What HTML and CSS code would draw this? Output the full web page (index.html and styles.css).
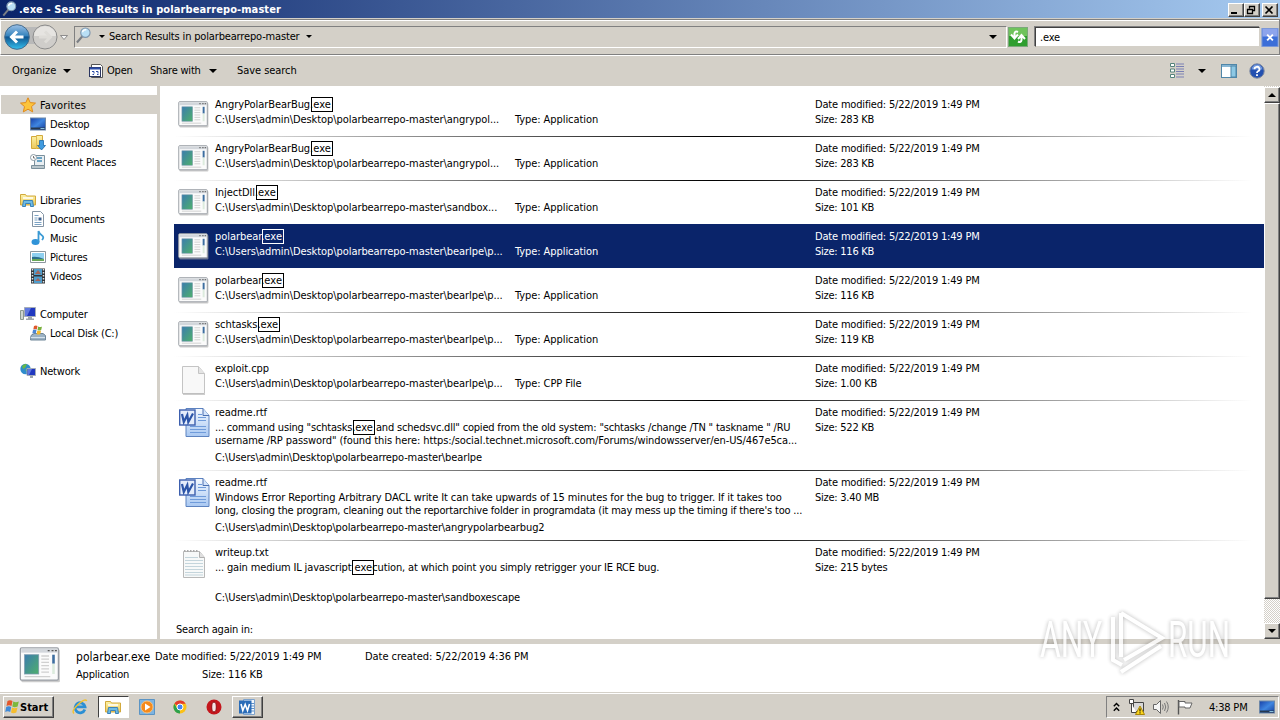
FILE: index.html
```html
<!DOCTYPE html>
<html lang="en">
<head>
    <meta charset="UTF-8">
    <meta name="viewport" content="width=device-width, initial-scale=1.0">
    <title>.exe - Search Results in polarbearrepo-master</title>
    <link rel="stylesheet" href="styles.css">
</head>
<body>
    <!-- Shared icons -->
    <svg class="defs">
        <defs>
            <linearGradient id="g-app" x1="0" y1="0" x2="1" y2="1">
                <stop offset="0" stop-color="#3b7cae"/><stop offset="1" stop-color="#4fb06c"/>
            </linearGradient>
            <linearGradient id="g-blue" x1="0" y1="0" x2="0" y2="1">
                <stop offset="0" stop-color="#9cc0e6"/><stop offset=".45" stop-color="#3583bd"/><stop offset=".5" stop-color="#0f5590"/><stop offset="1" stop-color="#35c0ee"/>
            </linearGradient>
            <linearGradient id="g-screen" x1="0" y1="0" x2="1" y2="1">
                <stop offset="0" stop-color="#1740a8"/><stop offset=".5" stop-color="#3f86e0"/><stop offset="1" stop-color="#123a9a"/>
            </linearGradient>
            <linearGradient id="g-folder" x1="0" y1="0" x2="0" y2="1">
                <stop offset="0" stop-color="#fdf3a8"/><stop offset="1" stop-color="#ecc85a"/>
            </linearGradient>
            <linearGradient id="g-word" x1="0" y1="0" x2="0" y2="1">
                <stop offset="0" stop-color="#f4f9ff"/><stop offset="1" stop-color="#a9c8f2"/>
            </linearGradient>
        </defs>
        <symbol id="app" viewBox="0 0 32 28">
            <rect x="1.5" y="2" width="30" height="25.5" rx="1" fill="#aaa" opacity=".6"/>
            <rect x=".7" y=".7" width="29.6" height="25" rx="1" fill="#fbfbfb" stroke="#9a9fa5"/>
            <rect x="1.4" y="1.4" width="28.2" height="3" fill="#d3d7dc"/>
            <path d="M22 2.8h1.5M25 2.8h1.5M27.6 2.8h1.5" stroke="#555"/>
            <rect x="4" y="6" width="11" height="15" fill="url(#g-app)" stroke="#7c9aae" stroke-width=".6"/>
            <path d="M17 7h6M17 9.500h6M17 12h6M17 14.500h6M17 17h6M17 19.500h6M4 23h20" stroke="#d0d0d0"/>
            <rect x="25.500" y="6" width="2" height="7" fill="#3d6ea0"/><path d="M26.500 13v8" stroke="#dcebdd" stroke-width="2"/>
        </symbol>
        <symbol id="page" viewBox="0 0 26 30">
            <path d="M1.500 1.500h16l6 7v20h-22z" fill="#f8f8f8" stroke="#c4c4c4"/>
            <path d="M17.500 1.500v7h6" fill="#e4e4e4" stroke="#c4c4c4"/>
            <path d="M2 29.300h22" stroke="#999" opacity=".6"/>
        </symbol>
        <symbol id="txt" viewBox="0 0 26 30">
            <path d="M2.500 2.500h16l5 6v20h-21z" fill="#f7f9f9" stroke="#b8b8b8"/>
            <path d="M4 8.500h13M4 11.500h18M4 14.500h18M4 17.500h18M4 20.500h18M4 23.500h18M4 26h18" stroke="#c4d5dc"/>
            <path d="M18.500 2.500v6h5" fill="#e0e0e0" stroke="#b0b0b0"/>
            <path d="M3 2h15" stroke="#aaa" stroke-width="2" stroke-dasharray="1.500 1.500"/>
        </symbol>
        <symbol id="rtf" viewBox="0 0 31 31">
            <path d="M7 1.500h17l6 7v21h-23z" fill="url(#g-word)" stroke="#5d83c0"/>
            <path d="M24 1.500v7h6" fill="#d4e4fa" stroke="#4a6fb0"/>
            <path d="M19 7.500h4M19 10.500h8M19 13.500h8M11 19.500h16M11 22.500h16M11 25.500h16" stroke="#6f9bda"/>
            <rect x=".7" y="3" width="15.300" height="15" fill="#e5edfb" stroke="#3c5fae" stroke-width="1.400"/>
            <path d="M3 7l1.800 8L8.300 8l1 7L14 6.500" fill="none" stroke="#2c55a8" stroke-width="2.200"/>
        </symbol>
        <symbol id="lens" viewBox="0 0 16 18">
            <path d="M1 16.500L7 9.500" stroke="#7a7e84" stroke-width="2.200"/>
            <circle cx="10" cy="6" r="5" fill="#b9dff5" stroke="#7f97ae" stroke-width="1.200"/>
            <path d="M7 5.500a3 3 0 0 1 4-2.500" fill="none" stroke="#fff" stroke-width="1.500"/>
        </symbol>
        <symbol id="library" viewBox="0 0 16 16">
            <path d="M.5 2.500h5l1 1.500h9v9H.5z" fill="url(#g-folder)" stroke="#d2a93c"/>
            <path d="M3 6h10" stroke="#fff" stroke-width="1.500"/>
            <path d="M2.500 14.500l1-6h9l1 6h-3v-3h-5v3z" fill="#6dbbe4" stroke="#3c83b8"/>
        </symbol>
        <symbol id="desktop" viewBox="0 0 16 16">
            <rect x=".5" y="2" width="15" height="12" fill="url(#g-screen)" stroke="#6d87a8"/>
            <path d="M1 12.500h14" stroke="#26384e" stroke-width="2"/>
            <path d="M10.500 12.500h4" stroke="#8ac3e0"/>
        </symbol>
    </svg>

    <header class="titlebar">
        <svg class="title-icon"><use href="#lens"/></svg>
        <span class="title">.exe - Search Results in polarbearrepo-master</span>
        <div class="window-buttons">
            <button class="win-btn"><svg viewBox="0 0 12 10"><path d="M2 8h6" stroke="#000" stroke-width="2"/></svg></button>
            <button class="win-btn"><svg viewBox="0 0 12 10"><path d="M4.500 3.500v-2h5v4h-2M4 1.500h6M2.500 4.500h5v4h-5zM2 4.500h6" fill="none" stroke="#000" stroke-width="1.300"/></svg></button>
            <button class="win-btn close"><svg viewBox="0 0 12 10"><path d="M2.500 1.500l7 7M9.500 1.500l-7 7" stroke="#000" stroke-width="1.700"/></svg></button>
        </div>
    </header>

    <nav class="navbar">
        <svg class="nav-arrows" viewBox="0 0 68 28">
            <rect x="10" y="4" width="36" height="17" fill="#b9b9b9"/>
            <circle cx="15" cy="14" r="12.300" fill="url(#g-blue)" stroke="#456b8c"/>
            <path d="M15 8.500L9.500 14l5.500 5.500M10 14h11.500" fill="none" stroke="#fff" stroke-width="3"/>
            <circle cx="43" cy="14" r="12" fill="#cfcdca" stroke="#8c8c8c"/>
            <path d="M32 13a11 10 0 0 1 22 0z" fill="#e6e4e1"/>
            <path d="M43 8.500l5.500 5.500l-5.500 5.500M37 14h11.500" fill="none" stroke="#dedcd8" stroke-width="3"/>
            <path d="M58.500 12.500h7l-3.500 4z" fill="#f6f6f6" stroke="#777" stroke-width=".8"/>
        </svg>
        <div class="address">
            <svg class="address-icon"><use href="#lens"/></svg>
            <i class="caret small"></i>
            <span class="crumb">Search Results in polarbearrepo-master</span>
            <i class="caret small"></i>
            <i class="caret last"></i>
        </div>
        <svg class="refresh" viewBox="0 0 20 20">
            <rect x=".5" y=".5" width="19" height="19" fill="#2f9e2f" stroke="#7aa87a"/>
            <path d="M1 1h18v8H1z" fill="#6fc35c"/>
            <path d="M10 5q-3-1.500-3.500 1.500v4M3 7.500l3.500 4l3.500-4M10 14.500q3 1.500 3.500-1.500V9M10 12l3.500-4l3.500 4" fill="none" stroke="#fff" stroke-width="2"/>
        </svg>
        <div class="search">.exe</div>
        <svg class="clear" viewBox="0 0 18 20">
            <rect x=".5" y=".5" width="17" height="19" fill="#3c6ed8" stroke="#7a98d8"/>
            <path d="M1 1h16v8H1z" fill="#8da4ec"/>
            <path d="M6 7l6 6M12 7l-6 6" stroke="#fff" stroke-width="2"/>
        </svg>
    </nav>

    <div class="toolbar">
        <span class="tool organize">Organize</span><i class="caret"></i>
        <svg class="open-icon" viewBox="0 0 14 14">
            <path d="M2.500.500h9l2 2v11h-11z" fill="#fff" stroke="#555"/>
            <rect x=".5" y="3.500" width="11" height="9" fill="#fff" stroke="#2a3560"/>
            <path d="M1 4.500h10" stroke="#2c4da8" stroke-width="2"/>
            <path d="M3 7.500h2v2M7 7.500h2v2M3.500 10.500h1.500M8 10.500h1.500" stroke="#2c4da8" fill="none"/>
        </svg>
        <span class="tool open">Open</span>
        <span class="tool share">Share with</span><i class="caret"></i>
        <span class="tool save">Save search</span>
        <div class="tool-right">
            <svg class="views" viewBox="0 0 14 16">
                <path d="M.5.500h4v3h-4zM.5 6h4v3h-4zM.5 11.500h4v3h-4z" fill="#fff" stroke="#55837b"/>
                <path d="M6 1h8M6 3.500h8M6 6h8M6 8.500h8M6 11h8M6 14h8" stroke="#7a80b4"/>
            </svg>
            <i class="caret"></i>
            <svg class="preview" viewBox="0 0 16 14">
                <rect x=".5" y=".5" width="15" height="13" fill="#fff" stroke="#4f86a8"/>
                <path d="M1 2h14" stroke="#87b6d4" stroke-width="2"/>
                <rect x="10" y="2" width="5" height="11" fill="#8dc8e4" stroke="#4f86a8"/>
            </svg>
            <svg class="help" viewBox="0 0 16 16">
                <circle cx="8" cy="8" r="7.200" fill="#2350b0" stroke="#7c88a0"/>
                <path d="M2.500 6.500a5.500 5 0 0 1 11 0z" fill="#6f96dc"/>
                <path d="M5.500 6.200a2.500 2.300 0 1 1 3.500 2q-1 .5-1 1.800M8 11.300v1.800" fill="none" stroke="#fff" stroke-width="1.800"/>
            </svg>
        </div>
    </div>

    <main class="content">
        <aside class="sidebar">
            <div class="side-group">
                <div class="side-item root active">
                    <svg viewBox="0 0 16 16"><path d="M8 .8l2.200 4.800 5.300.5-4 3.500 1.200 5.300L8 12.200l-4.700 2.700 1.200-5.300-4-3.500 5.300-.5z" fill="#fcc43c" stroke="#e08a1c"/></svg><span>Favorites</span>
                </div>
                <div class="side-item"><svg><use href="#desktop"/></svg><span>Desktop</span></div>
                <div class="side-item">
                    <svg viewBox="0 0 16 16"><path d="M1.500 1.500h5v-1h6v13h-11z" fill="url(#g-folder)" stroke="#d2a93c"/><path d="M6.500 1v13" stroke="#e0bc50"/><path d="M9.500 5.500h4v5h2L11.500 15 7.500 10.500h2z" fill="#3f9be0" stroke="#1d68a8" stroke-width=".8"/></svg><span>Downloads</span>
                </div>
                <div class="side-item">
                    <svg viewBox="0 0 16 16"><path d="M4.500 1.500h10v10h-10z" fill="#e8eef2" stroke="#7b909c"/><path d="M7 4h5M7 7h5" stroke="#6aa3c4" stroke-width="2"/><path d="M1.500 11.500h13v3h-13z" fill="#b9c6cc" stroke="#7b909c"/><circle cx="3.500" cy="3.500" r="3" fill="#fff" stroke="#8c9ba4"/><path d="M3.500 2v2h1.500" fill="none" stroke="#555" stroke-width=".8"/></svg><span>Recent Places</span>
                </div>
            </div>
            <div class="side-group">
                <div class="side-item root"><svg><use href="#library"/></svg><span>Libraries</span></div>
                <div class="side-item">
                    <svg viewBox="0 0 16 16"><path d="M2.500.500h8l3 3v12h-11z" fill="#fff" stroke="#8494a4"/><path d="M4.500 4.500h4M4.500 7h3M4.500 9h3M4.500 11.500h7M4.500 13.500h7" stroke="#7ba2c4"/><path d="M8.500 6.500h3v3h-3z" fill="#3c5f8c"/></svg><span>Documents</span>
                </div>
                <div class="side-item">
                    <svg viewBox="0 0 16 16"><ellipse cx="5.500" cy="12" rx="4" ry="3" fill="#2f93d8"/><path d="M8.500 12V1q1 3 3.500 4.500T12 10" fill="none" stroke="#3a9ad4" stroke-width="1.800"/></svg><span>Music</span>
                </div>
                <div class="side-item">
                    <svg viewBox="0 0 16 16"><path d="M.5 2.500h15v11H.5z" fill="#fff" stroke="#8c979e"/><path d="M2 4h12v8H2z" fill="#8fd0f0"/><path d="M2 8q5-1 12 2v2H2z" fill="#2c6f8c"/><path d="M2 11h12" stroke="#69a858" stroke-width="2"/></svg><span>Pictures</span>
                </div>
                <div class="side-item">
                    <svg viewBox="0 0 16 16"><path d="M1 .5h14v15H1z" fill="#303438"/><path d="M4 1h8v6H4zM4 8.500h8V15H4z" fill="#4f9dcc"/><path d="M5 6l3-4 3 4zM5 13l3-3 3 3z" fill="#a4665c"/><path d="M2.500 1v14M13.500 1v14" stroke="#dfe5e8" stroke-width="1.500" stroke-dasharray="1.500 1.500"/></svg><span>Videos</span>
                </div>
            </div>
            <div class="side-group">
                <div class="side-item root">
                    <svg viewBox="0 0 16 16"><path d="M.5 4.500h3v9h-3z" fill="#cfd6d0" stroke="#8c9a90"/><path d="M4.500 1.500h11v9h-11z" fill="#2038c0" stroke="#a4acb8"/><path d="M5 2h6L7 10H5z" fill="#5f78e0"/><path d="M8 11h4v1.500h2v1.500H6v-1.500h2z" fill="#9da5ac"/></svg><span>Computer</span>
                </div>
                <div class="side-item">
                    <svg viewBox="0 0 16 16"><path d="M1 10.500l3-2h9l2.500 2v4.500H.5z" fill="#9cb2c4" stroke="#6f8698"/><path d="M1 12.500h14" stroke="#d4e2ec"/><path d="M4 1q2-1 3.500 0l-.7 3.500q-2-1-3.500 0z" fill="#e0582c"/><path d="M8.200 1.500q2 1 3.800 0L11.200 5q-2 1-3.700 0z" fill="#7ab03c"/><path d="M3 5q2-1 3.500 0l-.7 3.500q-2-1-3.500 0z" fill="#4a86d4"/><path d="M7.300 5.500q2 1 3.800 0L10.300 9q-2 1-3.700 0z" fill="#f2b82c"/></svg><span>Local Disk (C:)</span>
                </div>
            </div>
            <div class="side-group">
                <div class="side-item root">
                    <svg viewBox="0 0 16 16"><circle cx="5.500" cy="6" r="5.200" fill="#2f8ccc"/><path d="M2 3q3-3 5-1.500L5 5 3 6zM5 7l4-2v4z" fill="#66b848"/><path d="M7 5.500h8.500v7H7z" fill="#2038c0" stroke="#a4acb8"/><path d="M8 6h4L9 12H8z" fill="#5f78e0"/><path d="M10 13h3v2h-3z" fill="#9da5ac"/></svg><span>Network</span>
                </div>
            </div>
        </aside>

        <section class="results">
            <div class="result">
                <svg class="thumb"><use href="#app"/></svg>
                <div class="info"><div class="name">AngryPolarBearBug.<mark>exe</mark></div><div class="line"><span class="path">C:\Users\admin\Desktop\polarbearrepo-master\angrypol...</span><span>Type: Application</span></div></div>
                <div class="meta"><div>Date modified: 5/22/2019 1:49 PM</div><div class="size">Size: 283 KB</div></div>
            </div>
            <div class="result">
                <svg class="thumb"><use href="#app"/></svg>
                <div class="info"><div class="name">AngryPolarBearBug.<mark>exe</mark></div><div class="line"><span class="path">C:\Users\admin\Desktop\polarbearrepo-master\angrypol...</span><span>Type: Application</span></div></div>
                <div class="meta"><div>Date modified: 5/22/2019 1:49 PM</div><div class="size">Size: 283 KB</div></div>
            </div>
            <div class="result">
                <svg class="thumb"><use href="#app"/></svg>
                <div class="info"><div class="name">InjectDll.<mark>exe</mark></div><div class="line"><span class="path">C:\Users\admin\Desktop\polarbearrepo-master\sandbox...</span><span>Type: Application</span></div></div>
                <div class="meta"><div>Date modified: 5/22/2019 1:49 PM</div><div class="size">Size: 101 KB</div></div>
            </div>
            <div class="result selected">
                <svg class="thumb"><use href="#app"/></svg>
                <div class="info"><div class="name">polarbear.<mark>exe</mark></div><div class="line"><span class="path">C:\Users\admin\Desktop\polarbearrepo-master\bearlpe\p...</span><span>Type: Application</span></div></div>
                <div class="meta"><div>Date modified: 5/22/2019 1:49 PM</div><div class="size">Size: 116 KB</div></div>
            </div>
            <div class="result">
                <svg class="thumb"><use href="#app"/></svg>
                <div class="info"><div class="name">polarbear.<mark>exe</mark></div><div class="line"><span class="path">C:\Users\admin\Desktop\polarbearrepo-master\bearlpe\p...</span><span>Type: Application</span></div></div>
                <div class="meta"><div>Date modified: 5/22/2019 1:49 PM</div><div class="size">Size: 116 KB</div></div>
            </div>
            <div class="result">
                <svg class="thumb"><use href="#app"/></svg>
                <div class="info"><div class="name">schtasks.<mark>exe</mark></div><div class="line"><span class="path">C:\Users\admin\Desktop\polarbearrepo-master\bearlpe\p...</span><span>Type: Application</span></div></div>
                <div class="meta"><div>Date modified: 5/22/2019 1:49 PM</div><div class="size">Size: 119 KB</div></div>
            </div>
            <div class="result">
                <svg class="thumb file"><use href="#page"/></svg>
                <div class="info"><div class="name">exploit.cpp</div><div class="line"><span class="path">C:\Users\admin\Desktop\polarbearrepo-master\bearlpe\p...</span><span>Type: CPP File</span></div></div>
                <div class="meta"><div>Date modified: 5/22/2019 1:49 PM</div><div class="size">Size: 1.00 KB</div></div>
            </div>
            <div class="result tall">
                <svg class="thumb word"><use href="#rtf"/></svg>
                <div class="info">
                    <div class="name">readme.rtf</div>
                    <div class="snippet">
                        <div class="tight">... command using "schtasks.<mark>exe</mark> and schedsvc.dll" copied from the old system: "schtasks /change /TN " taskname " /RU</div>
                        <div class="loose">username /RP password" (found this here: https:/social.technet.microsoft.com/Forums/windowsserver/en-US/467e5ca...</div>
                    </div>
                    <div class="where">C:\Users\admin\Desktop\polarbearrepo-master\bearlpe</div>
                </div>
                <div class="meta"><div>Date modified: 5/22/2019 1:49 PM</div><div class="size">Size: 522 KB</div></div>
            </div>
            <div class="result tall">
                <svg class="thumb word"><use href="#rtf"/></svg>
                <div class="info">
                    <div class="name">readme.rtf</div>
                    <div class="snippet">
                        <div class="loose">Windows Error Reporting Arbitrary DACL write It can take upwards of 15 minutes for the bug to trigger. If it takes too</div>
                        <div class="tight">long, closing the program, cleaning out the reportarchive folder in programdata (it may mess up the timing if there's too ...</div>
                    </div>
                    <div class="where">C:\Users\admin\Desktop\polarbearrepo-master\angrypolarbearbug2</div>
                </div>
                <div class="meta"><div>Date modified: 5/22/2019 1:49 PM</div><div class="size">Size: 3.40 MB</div></div>
            </div>
            <div class="result tall">
                <svg class="thumb file"><use href="#txt"/></svg>
                <div class="info">
                    <div class="name">writeup.txt</div>
                    <div class="snippet">... gain medium IL javascript <mark>exe</mark>cution, at which point you simply retrigger your IE RCE bug.</div>
                    <div class="where">C:\Users\admin\Desktop\polarbearrepo-master\sandboxescape</div>
                </div>
                <div class="meta"><div>Date modified: 5/22/2019 1:49 PM</div><div class="size">Size: 215 bytes</div></div>
            </div>
            <div class="again">Search again in:</div>
        </section>

        <div class="scrollbar">
            <div class="scroll-btn"><i class="caret up"></i></div>
            <div class="scroll-thumb"></div>
            <div class="scroll-btn bottom"><i class="caret"></i></div>
        </div>
    </main>

    <footer class="details">
        <svg class="details-icon"><use href="#app"/></svg>
        <div class="details-col first"><div class="details-name">polarbear.exe</div><div>Application</div></div>
        <div class="details-col second"><div>Date modified: 5/22/2019 1:49 PM</div><div class="details-size">Size: 116 KB</div></div>
        <div class="details-col third"><div>Date created: 5/22/2019 4:36 PM</div></div>
    </footer>

    <div class="taskbar">
        <button class="start">
            <svg viewBox="0 0 16 16"><path d="M3.500 2q2.500-1.500 5 0l-1 5q-2.500-1.500-5 0z" fill="#e4572a"/><path d="M9.300 2.500q2.500 1.500 5.500 0l-1.200 5q-3 1.500-5.300 0z" fill="#7cb83c"/><path d="M2.200 8q2.500-1.500 5 0l-1 5q-2.500-1.500-5 0z" fill="#3f8ad8"/><path d="M8 8.500q2.500 1.500 5.500 0l-1.200 5q-3 1.500-5.300 0z" fill="#f5bd2e"/></svg>Start
        </button>
        <div class="task">
            <svg viewBox="0 0 16 16"><path d="M12.800 10.500A5 5 0 1 1 13 7.800H4" fill="none" stroke="#2b8fd4" stroke-width="2.800"/><path d="M2 14.500Q-1 12 6 5.500T14.800 2" fill="none" stroke="#f2c12e" stroke-width="1.400"/></svg>
        </div>
        <div class="task pressed"><svg><use href="#library"/></svg></div>
        <div class="task">
            <svg viewBox="0 0 16 16"><path d="M.5.500h15v15H.5z" fill="#7db4e2" stroke="#5b94c4"/><circle cx="8" cy="8" r="6" fill="#f58a1c" stroke="#fbc27a"/><path d="M6 4.500L11.500 8 6 11.500z" fill="#fff"/></svg>
        </div>
        <div class="task">
            <svg viewBox="0 0 16 16"><circle cx="8" cy="8" r="6.500" fill="#fbc116"/><path d="M8 8L2.400 4.700A6.500 6.500 0 0 1 13.700 4.800H8z" fill="#e33b2e"/><path d="M8 14.500A6.500 6.500 0 0 1 2.400 4.700L5.200 9.600 8 11z" fill="#2da14c"/><circle cx="8" cy="8" r="3" fill="#4285f4" stroke="#fff"/></svg>
        </div>
        <div class="task">
            <svg viewBox="0 0 16 16"><circle cx="8" cy="8" r="7.500" fill="#c4161c"/><ellipse cx="8" cy="8" rx="2.300" ry="5" fill="#f4e4e4" stroke="#8c0d12"/></svg>
        </div>
        <div class="task raised">
            <svg viewBox="0 0 16 16"><path d="M4.500.500h11v15h-11z" fill="#f3f8fd" stroke="#7da2cc"/><path d="M12 4.500h3M12 7h3M12 9.500h3M12 12h3" stroke="#5e90c8"/><path d="M0 1.500h12.500v13H0z" fill="#2a6cb8"/><path d="M2 5l1.800 6.500L6.200 5.500l2.300 6L10.500 5" fill="none" stroke="#fff" stroke-width="1.600"/></svg>
        </div>
        <div class="tray">
            <svg class="chev" viewBox="0 0 7 10"><path d="M.8 4.300l2.700-2.800 2.700 2.800M.8 8.800l2.700-2.800 2.700 2.800" fill="none" stroke="#000" stroke-width="1.400"/></svg>
            <svg class="tray-icon" viewBox="0 0 16 16"><path d="M4.500 3.500h10v9h-10z" fill="#d8d8d8" stroke="#444"/><path d="M.5.500h4v4h-4zM2.500 4.500v9h5" fill="#fff" stroke="#444"/><path d="M11 7l4.500 8.500h-9z" fill="#fbd51c" stroke="#a98508"/><path d="M11 9.500v3M11 13.300v1.200" stroke="#000"/></svg>
            <svg class="tray-icon" viewBox="0 0 16 16"><path d="M.5 5.500h3l4-4v13l-4-4h-3z" fill="#f5f5f5" stroke="#666"/><path d="M9.500 5.500q1.500 2.500 0 5M11.500 4q2.500 4 0 8M13.500 2.500q3.500 5.500 0 11" fill="none" stroke="#777"/></svg>
            <svg class="tray-icon" viewBox="0 0 16 16"><path d="M1.500 1v14.500" stroke="#555" stroke-width="1.400"/><path d="M2 2.500h6v1.500h7l-2 5H8V8H2z" fill="#fff" stroke="#666"/></svg>
            <span class="clock">4:38 PM</span>
            <svg class="show-desktop"><use href="#desktop"/></svg>
        </div>
    </div>

    <svg class="watermark" viewBox="0 0 220 90">
        <text x="3" y="60" textLength="62" lengthAdjust="spacingAndGlyphs">ANY</text>
        <text x="131" y="60" textLength="62" lengthAdjust="spacingAndGlyphs">RUN</text>
        <path d="M76 20v43l9 5M84 16v44M84 16l41 25-38 22M84 75l40-26" fill="none" stroke="#fff" stroke-width="4"/>
    </svg>
</body>
</html>
```
FILE: styles.css
```css
* {
    box-sizing: border-box;
}

body {
    margin: 0;
    width: 1280px;
    height: 720px;
    overflow: hidden;
    display: flex;
    flex-direction: column;
    position: relative;
    background: #d4d0c8;
    color: #000;
    font-family: "DejaVu Sans Condensed", "DejaVu Sans", sans-serif;
    font-stretch: condensed;
    font-size: 11px;
    letter-spacing: -0.2px;
    line-height: 15px;
    white-space: nowrap;
}

svg {
    display: block;
    flex-shrink: 0;
}

.defs {
    position: absolute;
    width: 0;
    height: 0;
}

button {
    padding: 0;
    font: inherit;
    letter-spacing: inherit;
    color: #000;
    background: #d4d0c8;
    border: 1px solid;
    border-color: #fff #404040 #404040 #fff;
    box-shadow: inset -1px -1px #808080;
}

.caret {
    flex-shrink: 0;
    border: 4px solid transparent;
    border-top-color: #000;
    border-bottom: 0;
}

.caret.small {
    border-width: 3px 3px 0;
}

.caret.up {
    border: 4px solid transparent;
    border-bottom-color: #000;
    border-top: 0;
}

/* Title bar */
.titlebar {
    height: 18px;
    display: flex;
    align-items: center;
    background: linear-gradient(to right, #0a246a, #a6caf0);
}

.title-icon {
    width: 15px;
    height: 16px;
    margin-left: 2px;
}

.title {
    margin-left: 2px;
    color: #fff;
    font-weight: bold;
    letter-spacing: 0.09px;
}

.window-buttons {
    display: flex;
    margin: 1px 2px 0 auto;
}

.win-btn {
    width: 16px;
    height: 14px;
}

.win-btn svg {
    width: 12px;
    height: 10px;
}

.win-btn.close {
    margin-left: 2px;
}

/* Address row */
.navbar {
    height: 36px;
    margin-top: 1px;
    display: flex;
    align-items: center;
    border: 1px solid;
    border-color: #808080 #808080 #808080 #fff;
    box-shadow: inset 0 1px #fff, 0 1px #fff;
}

.nav-arrows {
    width: 68px;
    height: 28px;
    margin-left: 1px;
}

.address {
    width: 933px;
    height: 22px;
    margin-left: 4px;
    padding-bottom: 1px;
    display: flex;
    align-items: center;
    border: 1px solid;
    border-color: #808080 #fff #fff #808080;
}

.address-icon {
    width: 15px;
    height: 17px;
    margin: -2px 8px 0 1px;
}

.crumb {
    margin: 0 6px 0 4px;
    letter-spacing: -0.16px;
}

.caret.last {
    margin: 1px 9px 0 auto;
}

.refresh {
    width: 20px;
    height: 20px;
    margin-left: 1px;
}

.search {
    width: 225px;
    height: 20px;
    margin: 0 1px 0 7px;
    padding: 2px 4px 0;
    background: #fff;
    border: 1px solid;
    border-color: #404040 #d4d0c8 #d4d0c8 #404040;
    box-shadow: -1px -1px #808080;
}

.clear {
    width: 18px;
    height: 19px;
}

/* Command bar */
.toolbar {
    height: 31px;
    padding-left: 12px;
    display: flex;
    align-items: center;
}

.organize {
    width: 51px;
    letter-spacing: 0;
}

.open-icon {
    width: 14px;
    height: 14px;
    margin: 0 4px 0 18px;
}

.open {
    width: 43px;
}

.share {
    width: 59px;
}

.save {
    margin-left: 20px;
    letter-spacing: -0.05px;
}

.tool-right {
    display: flex;
    align-items: center;
    margin: 0 15px 0 auto;
}

.views {
    width: 14px;
    height: 16px;
    margin-right: 14px;
}

.preview {
    width: 16px;
    height: 14px;
    margin: 0 12px 0 15px;
}

.help {
    width: 16px;
    height: 16px;
}

/* Main area */
.content {
    height: 553px;
    display: flex;
    background: #fff;
}

.sidebar {
    width: 160px;
    padding: 9px 0 0 1px;
    display: flex;
    flex-direction: column;
    gap: 19px;
    border-right: 3px solid #d4d0c8;
}

.side-item {
    height: 19px;
    padding-left: 29px;
    display: flex;
    align-items: center;
    gap: 4px;
}

.side-item.root {
    padding-left: 19px;
}

.side-item svg {
    width: 16px;
    height: 16px;
}

.side-item span {
    padding-top: 2px;
}

.active {
    background: #d4d0c8;
    letter-spacing: 0.15px;
}

.results {
    width: 1104px;
    padding: 6px 0 0 14px;
}

.result {
    height: 44px;
    padding: 5px 0 0 4px;
    display: flex;
    background: linear-gradient(to right, #fff, #000 50%, #fff) no-repeat 0 0 / 1078px 1px;
}

.result:first-child,
.selected + .result {
    background: none;
}

.result.tall {
    height: 70px;
}

.result.selected {
    background: #0a246a;
    color: #fff;
}

.thumb {
    width: 31px;
    height: 27px;
    margin: 4px 6px 0 0;
}

.thumb.file {
    width: 26px;
    height: 30px;
    margin: 4px 8px 0 3px;
}

.thumb.word {
    height: 31px;
    margin: 2px 5px 0 1px;
}

.info {
    width: 600px;
}

.name {
    letter-spacing: -0.06px;
}

.line {
    display: flex;
    letter-spacing: -0.07px;
}

.path {
    width: 300px;
}

mark {
    margin: 0 -1px;
    padding: 0 1px;
    color: inherit;
    background: none;
    outline: 1px solid currentColor;
    letter-spacing: 0.1px;
}

.snippet {
    height: 26px;
    line-height: 13px;
    margin-top: 1px;
    letter-spacing: -0.15px;
}

.tight {
    letter-spacing: -0.19px;
}

.loose {
    letter-spacing: -0.09px;
}

.where {
    margin-top: 3px;
    letter-spacing: -0.11px;
}

.meta {
    letter-spacing: -0.18px;
}

.size {
    letter-spacing: -0.25px;
}

.again {
    margin: 12px 0 0 2px;
}

.scrollbar {
    width: 16px;
    padding-top: 1px;
    display: flex;
    flex-direction: column;
    background: repeating-conic-gradient(#fff 0 25%, #d4d0c8 0 50%) 0 0 / 2px 2px;
}

.scroll-btn,
.scroll-thumb {
    height: 16px;
    display: flex;
    align-items: center;
    justify-content: center;
    background: #d4d0c8;
    border: 1px solid;
    border-color: #fff #404040 #404040 #fff;
    box-shadow: inset -1px -1px #808080;
}

.scroll-thumb {
    height: 496px;
}

.scroll-btn.bottom {
    margin-top: auto;
}

/* Details pane */
.details {
    height: 54px;
    padding: 4px 0 0 19px;
    display: flex;
    background: #fff;
    border-top: 5px solid #d4d0c8;
    border-bottom: 1px solid #d4d0c8;
    line-height: 18px;
}

.details-icon {
    width: 42px;
    height: 36px;
    margin: -1px 15px 0 0;
}

.first {
    width: 79px;
}

.details-name {
    font-size: 12px;
    letter-spacing: 0.05px;
}

.second {
    width: 210px;
    letter-spacing: -0.12px;
}

.third {
    letter-spacing: -0.04px;
}

.details-size {
    padding-left: 47px;
}

/* Taskbar */
.taskbar {
    height: 27px;
    padding: 2px 1px 2px 3px;
    display: flex;
    align-items: center;
    border-top: 1px solid #fff;
}

.start {
    width: 51px;
    height: 22px;
    margin-right: 10px;
    display: flex;
    align-items: center;
    font-weight: bold;
    letter-spacing: 0;
}

.start svg {
    width: 16px;
    height: 16px;
}

.task {
    width: 31px;
    height: 22px;
    margin-right: 2.5px;
    display: flex;
    align-items: center;
    justify-content: center;
}

.task svg {
    width: 16px;
    height: 16px;
}

.pressed {
    background: #fff;
    border: 1px solid;
    border-color: #404040 #fff #fff #404040;
}

.raised {
    border: 1px solid;
    border-color: #fff #404040 #404040 #fff;
    box-shadow: inset -1px -1px #808080;
}

.tray {
    width: 173px;
    height: 22px;
    margin-left: auto;
    padding: 0 3px 0 6px;
    display: flex;
    align-items: center;
    border: 1px solid;
    border-color: #808080 #fff #fff #808080;
}

.chev {
    width: 7px;
    height: 10px;
    margin-right: 9px;
}

.tray-icon {
    width: 16px;
    height: 16px;
    margin-right: 8px;
}

.clock {
    margin-left: 8px;
}

.show-desktop {
    width: 16px;
    height: 16px;
    margin-left: auto;
}

.watermark {
    position: absolute;
    left: 1037px;
    top: 597px;
    width: 220px;
    height: 90px;
    opacity: 0.8;
    filter: drop-shadow(0 0 2px rgba(0, 0, 0, 0.35));
}

.watermark text {
    font: 400 50px Roboto, sans-serif;
    letter-spacing: 0;
    fill: #fff;
}
```
